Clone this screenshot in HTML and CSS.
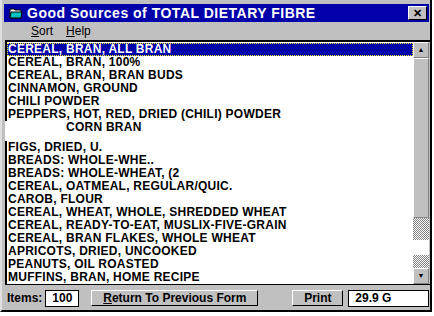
FILE: index.html
```html
<!DOCTYPE html>
<html lang="en">
<head>
    <meta charset="UTF-8">
    <title>Good Sources of TOTAL DIETARY FIBRE</title>
    <link rel="stylesheet" href="styles.css">
</head>
<body>
    <div class="window">
        <div class="titlebar">
            <svg class="app-icon" width="14" height="12" viewBox="0 0 14 12">
                <path d="M1 2 H5 L6 3 H12 V11 H1 Z" fill="#fff" stroke="#000" stroke-width="1"/>
                <path d="M2 5 H13 L12 11 H1 Z" fill="#00c0c0" stroke="#000" stroke-width="1"/>
            </svg>
            <span class="title">Good Sources of TOTAL DIETARY FIBRE</span>
            <button class="close-btn">&#x2715;</button>
        </div>

        <div class="menubar">
            <span class="menu-item"><u>S</u>ort</span>
            <span class="menu-item"><u>H</u>elp</span>
        </div>

        <div class="listbox">
            <div class="items">
                <div class="row selected">CEREAL, BRAN, ALL BRAN</div>
                <div class="row">CEREAL, BRAN, 100%</div>
                <div class="row">CEREAL, BRAN, BRAN BUDS</div>
                <div class="row">CINNAMON, GROUND</div>
                <div class="row">CHILI POWDER</div>
                <div class="row">PEPPERS, HOT, RED, DRIED (CHILI) POWDER</div>
                <div class="row glitch">CORN BRAN</div>
                <div class="gap"></div>
                <div class="row">FIGS, DRIED, U.</div>
                <div class="row">BREADS: WHOLE-WHE..</div>
                <div class="row">BREADS: WHOLE-WHEAT, (2</div>
                <div class="row">CEREAL, OATMEAL, REGULAR/QUIC.</div>
                <div class="row">CAROB, FLOUR</div>
                <div class="row">CEREAL, WHEAT, WHOLE, SHREDDED WHEAT</div>
                <div class="row">CEREAL, READY-TO-EAT, MUSLIX-FIVE-GRAIN</div>
                <div class="row">CEREAL, BRAN FLAKES, WHOLE WHEAT</div>
                <div class="row">APRICOTS, DRIED, UNCOOKED</div>
                <div class="row">PEANUTS, OIL ROASTED</div>
                <div class="row">MUFFINS, BRAN, HOME RECIPE</div>
            </div>
            <div class="scrollbar">
                <div class="sb-btn">&#9650;</div>
                <div class="sb-thumb"></div>
                <div class="sb-track"></div>
                <div class="sb-blank"></div>
                <div class="sb-track short"></div>
                <div class="sb-btn">&#9660;</div>
            </div>
        </div>

        <div class="footer">
            <span class="label">Items:</span>
            <span class="field count">100</span>
            <button class="btn return-btn"><u>R</u>eturn To Previous Form</button>
            <button class="btn print-btn">Print</button>
            <span class="field total">29.9 G</span>
        </div>
    </div>
</body>
</html>
```

FILE: styles.css
```css
body {
    margin: 0;
    background: #fff;
    font-family: "Liberation Sans", Arial, sans-serif;
}
.window {
    width: 432px;
    height: 312px;
    box-sizing: border-box;
    background: #c0c0c0;
    border-left: 2px solid #dfdfdf;
    border-right: 2px solid #000;
    border-bottom: 2px solid #000;
    padding: 4px 0 0 2px;
}
.titlebar {
    height: 18px;
    margin-right: 1px;
    background: #0000aa;
    color: #fff;
    display: flex;
    align-items: center;
    padding-left: 5px;
}
.app-icon {
    margin-right: 4px;
}
.title {
    font-weight: bold;
    font-size: 14px;
    letter-spacing: 0.5px;
    flex: 1;
}
.close-btn {
    width: 19px;
    height: 14px;
    margin-right: 2px;
    padding: 0;
    background: #c0c0c0;
    border: 1px solid;
    border-color: #fff #000 #000 #fff;
    font-size: 11px;
    font-weight: bold;
    line-height: 12px;
    color: #000;
}
.menubar {
    height: 18px;
    display: flex;
    align-items: center;
    padding-left: 27px;
    gap: 13px;
    font-size: 12px;
}
.listbox {
    display: flex;
    margin-left: 1px;
    border-top: 2px solid #000;
    border-bottom: 1px solid #000;
    height: 242px;
}
.items {
    flex: 1;
    background: #fff;
    border-left: 2px solid #000;
    padding-top: 1px;
}
.row {
    height: 13px;
    line-height: 13px;
    font-size: 12px;
    font-weight: bold;
    letter-spacing: 0.25px;
    padding-left: 1px;
    white-space: nowrap;
    overflow: hidden;
}
.row.selected {
    background: #0000aa;
    color: #fff;
    outline: 1px dotted #ffff00;
    outline-offset: -1px;
}
.row.glitch {
    padding-left: 59px;
    margin-left: -2px;
    border-left: 2px solid #fff;
}
.gap {
    height: 7px;
    margin-left: -2px;
    border-left: 2px solid #fff;
}
.scrollbar {
    width: 16px;
    display: flex;
    flex-direction: column;
    border-right: 1px solid #c0c0c0;
}
.sb-btn {
    height: 14px;
    background: #c0c0c0;
    border: 1px solid;
    border-color: #fff #808080 #808080 #fff;
    font-size: 7px;
    line-height: 14px;
    text-align: center;
}
.sb-thumb {
    height: 158px;
    background: #c0c0c0;
    border: 1px solid;
    border-color: #fff #808080 #808080 #fff;
}
.sb-track {
    height: 22px;
    background: repeating-conic-gradient(#808080 0 25%, #fff 0 50%) 0 0 / 2px 2px;
}
.sb-track.short {
    height: 13px;
}
.sb-blank {
    flex: 1;
    background: #fff;
}
.footer {
    display: flex;
    align-items: center;
    height: 26px;
    padding-left: 3px;
    font-size: 12px;
    font-weight: bold;
}
.label {
    margin-right: 3px;
}
.field {
    height: 15px;
    background: #fff;
    border: 1px solid #000;
    line-height: 15px;
    padding-left: 6px;
}
.count {
    width: 26px;
}
.total {
    width: 73px;
    margin-left: 5px;
}
.btn {
    height: 16px;
    padding: 0;
    background: #c0c0c0;
    border: 1px solid;
    border-color: #fff #000 #000 #fff;
    font-family: inherit;
    font-size: 12px;
    font-weight: bold;
}
.return-btn {
    width: 167px;
    margin-left: 12px;
}
.print-btn {
    width: 51px;
    margin-left: 34px;
}
```
